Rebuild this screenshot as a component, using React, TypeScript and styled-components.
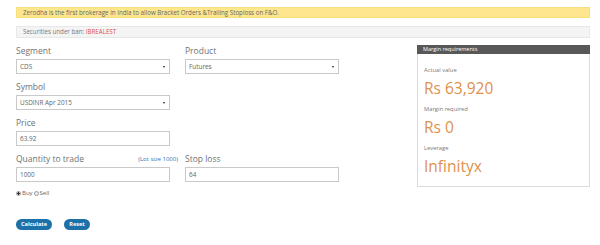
import React from 'react';
import styled, { createGlobalStyle } from 'styled-components';

const GlobalStyle = createGlobalStyle`
  html, body {
    margin: 0;
    padding: 0;
    background: #fff;
    font-family: 'Open Sans', 'Liberation Sans', sans-serif;
    color: #555;
  }
  * { box-sizing: border-box; }
`;

const Page = styled.div`
  width: 574px;
  margin-left: 16px;
  padding-top: 7px;
`;

const Notice = styled.div`
  height: 11px;
  background: #fde68e;
  border: 1px solid #f8df7a;
  padding-left: 6px;
  font-size: 6.2px;
  line-height: 9px;
  color: #666;
`;

const BanBar = styled.div`
  margin-top: 8px;
  height: 12px;
  background: #f4f4f5;
  border: 1px solid #e8e8e8;
  padding-left: 6px;
  font-size: 6.2px;
  line-height: 10px;
  color: #777;

  span {
    color: #d9534f;
  }
`;

const Main = styled.div`
  display: flex;
  justify-content: space-between;
  align-items: flex-start;
  margin-top: 7px;
`;

const Form = styled.div`
  width: 324px;
  padding-top: 1px;
`;

const Row = styled.div`
  display: flex;
  gap: 15px;
  margin-bottom: 8px;
`;

const Field = styled.div`
  width: 154px;
`;

const LabelRow = styled.div`
  display: flex;
  justify-content: space-between;
  align-items: center;
  height: 10px;
  margin-bottom: 3px;
`;

const Label = styled.label`
  font-size: 8.5px;
  line-height: 10px;
  color: #727272;
`;

const Lot = styled.span`
  font-size: 6px;
  color: #2f6fb0;
  margin-right: -8px;
`;

const SelectBox = styled.div`
  height: 15px;
  border: 1px solid #c9c9c9;
  background: #fff;
  display: flex;
  align-items: center;
  justify-content: space-between;
  padding: 0 4px 0 3px;
  font-size: 6.4px;
  color: #666;
`;

const Caret = styled.span`
  width: 0;
  height: 0;
  border-left: 1.5px solid transparent;
  border-right: 1.5px solid transparent;
  border-top: 2.5px solid #222;
`;

const TextInput = styled.input`
  display: block;
  width: 154px;
  height: 15px;
  border: 1px solid #c9c9c9;
  padding: 0 3px;
  font-family: inherit;
  font-size: 6.4px;
  color: #666;
  outline: none;
`;

const Side = styled.div`
  display: flex;
  align-items: center;
  gap: 1px;
  margin-top: -1px;
  font-size: 6px;
  color: #666;
`;

const Radio = styled.span<{ $on?: boolean }>`
  width: 5px;
  height: 5px;
  border-radius: 50%;
  border: 0.7px solid #999;
  background: ${(p) => (p.$on ? 'radial-gradient(circle, #333 0 1.2px, #fff 1.4px)' : '#eee')};
`;

const Buttons = styled.div`
  display: flex;
  gap: 12px;
  margin-top: 22px;
`;

const Button = styled.button<{ $w: number }>`
  width: ${(p) => p.$w}px;
  height: 11px;
  padding: 0;
  border: none;
  border-radius: 6px;
  background: #1c71a8;
  color: #fff;
  font-family: inherit;
  font-weight: 700;
  font-size: 5.6px;
  line-height: 11px;
`;

const Panel = styled.div`
  width: 173px;
  height: 142px;
  border: 1px solid #dcdcdc;
  border-top: none;
`;

const PanelHead = styled.div`
  height: 9px;
  margin: 0 -1px;
  background: #585858;
  color: #fff;
  font-size: 5.5px;
  line-height: 9px;
  padding-left: 6px;
`;

const PanelBody = styled.div`
  padding: 12px 6px 0;
`;

const Caption = styled.div`
  font-size: 5.8px;
  line-height: 8px;
  color: #777;
`;

const Value = styled.div`
  font-size: 15.5px;
  line-height: 20px;
  color: #e0914c;
  margin: 4px 0 7px;
`;

export default function App() {
  return (
    <>
      <GlobalStyle />
      <Page>
        <Notice>Zerodha is the first brokerage in India to allow Bracket Orders &amp;Trailing Stoploss on F&amp;O.</Notice>
        <BanBar>
          Securities under ban: <span>IBREALEST</span>
        </BanBar>
        <Main>
          <Form>
            <Row>
              <Field>
                <LabelRow><Label>Segment</Label></LabelRow>
                <SelectBox>CDS<Caret /></SelectBox>
              </Field>
              <Field>
                <LabelRow><Label>Product</Label></LabelRow>
                <SelectBox>Futures<Caret /></SelectBox>
              </Field>
            </Row>
            <Row>
              <Field>
                <LabelRow><Label>Symbol</Label></LabelRow>
                <SelectBox>USDINR Apr 2015<Caret /></SelectBox>
              </Field>
            </Row>
            <Row>
              <Field>
                <LabelRow><Label>Price</Label></LabelRow>
                <TextInput defaultValue="63.92" />
              </Field>
            </Row>
            <Row>
              <Field>
                <LabelRow>
                  <Label>Quantity to trade</Label>
                  <Lot>(Lot size 1000)</Lot>
                </LabelRow>
                <TextInput defaultValue="1000" />
              </Field>
              <Field>
                <LabelRow><Label>Stop loss</Label></LabelRow>
                <TextInput defaultValue="64" />
              </Field>
            </Row>
            <Side>
              <Radio $on />Buy<Radio />Sell
            </Side>
            <Buttons>
              <Button $w={36}>Calculate</Button>
              <Button $w={26}>Reset</Button>
            </Buttons>
          </Form>
          <Panel>
            <PanelHead>Margin requirements</PanelHead>
            <PanelBody>
              <Caption>Actual value</Caption>
              <Value>Rs 63,920</Value>
              <Caption>Margin required</Caption>
              <Value>Rs 0</Value>
              <Caption>Leverage</Caption>
              <Value>Infinityx</Value>
            </PanelBody>
          </Panel>
        </Main>
      </Page>
    </>
  );
}
